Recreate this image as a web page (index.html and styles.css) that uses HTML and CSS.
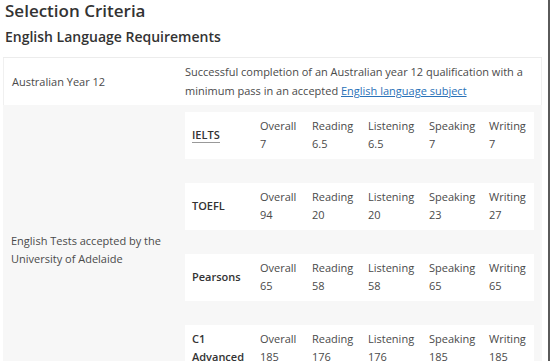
FILE: index.html
```html
<!DOCTYPE html>
<html lang="en">
<head>
<meta charset="utf-8">
<title>Selection Criteria</title>
<link rel="stylesheet" href="styles.css">
</head>
<body>
<div class="frame">
  <h1 class="title">Selection Criteria</h1>
  <h2 class="subtitle">English Language Requirements</h2>
  <div class="table">
    <div class="row row-white">
      <div class="cell-label">Australian Year 12</div>
      <div class="cell-body">Successful completion of an Australian year 12 qualification with a minimum pass in an accepted <a href="#" class="link">English language subject</a></div>
    </div>
    <div class="row row-grey">
      <div class="cell-label">English Tests accepted by the University of Adelaide</div>
      <div class="cell-body cards">
        <div class="card">
          <div class="test"><abbr class="abbr" title="International English Language Testing System">IELTS</abbr></div>
          <div class="score"><span>Overall</span><span>7</span></div>
          <div class="score"><span>Reading</span><span>6.5</span></div>
          <div class="score"><span>Listening</span><span>6.5</span></div>
          <div class="score"><span>Speaking</span><span>7</span></div>
          <div class="score"><span>Writing</span><span>7</span></div>
        </div>
        <div class="card">
          <div class="test">TOEFL</div>
          <div class="score"><span>Overall</span><span>94</span></div>
          <div class="score"><span>Reading</span><span>20</span></div>
          <div class="score"><span>Listening</span><span>20</span></div>
          <div class="score"><span>Speaking</span><span>23</span></div>
          <div class="score"><span>Writing</span><span>27</span></div>
        </div>
        <div class="card">
          <div class="test">Pearsons</div>
          <div class="score"><span>Overall</span><span>65</span></div>
          <div class="score"><span>Reading</span><span>58</span></div>
          <div class="score"><span>Listening</span><span>58</span></div>
          <div class="score"><span>Speaking</span><span>65</span></div>
          <div class="score"><span>Writing</span><span>65</span></div>
        </div>
        <div class="card">
          <div class="test">C1 Advanced</div>
          <div class="score"><span>Overall</span><span>185</span></div>
          <div class="score"><span>Reading</span><span>176</span></div>
          <div class="score"><span>Listening</span><span>176</span></div>
          <div class="score"><span>Speaking</span><span>185</span></div>
          <div class="score"><span>Writing</span><span>185</span></div>
        </div>
      </div>
    </div>
  </div>
</div>
</body>
</html>
```
FILE: styles.css
```css
html, body {
  margin: 0;
  padding: 0;
  background: #ffffff;
}
body {
  font-family: "Open Sans", "Liberation Sans", sans-serif;
  color: #4a4a4a;
  font-size: 11px;
  overflow: hidden;
}
.frame {
  width: 550px;
  height: 361px;
  border-right: 2px solid #5a5a5a;
  padding-left: 3px;
  box-sizing: border-box;
  overflow: hidden;
}
.title {
  margin: 0;
  padding: 0 0 0 2px;
  font-size: 17px;
  font-weight: 600;
  line-height: 22px;
  color: #333333;
}
.subtitle {
  margin: 5px 0 0 0;
  padding: 0 0 0 2px;
  font-size: 14px;
  font-weight: 600;
  line-height: 20px;
  color: #333333;
}
.table {
  margin-top: 10px;
  width: 539px;
  border-top: 1px solid #ececec;
}
.row {
  display: grid;
  grid-template-columns: 173px 1fr;
}
.row-white {
  background: #ffffff;
  border-left: 1px solid #f0f0f0;
  border-right: 1px solid #f0f0f0;
}
.row-grey {
  background: #f7f7f7;
}
.cell-label {
  align-self: center;
  padding: 0 10px 0 8px;
  line-height: 18px;
}
.cell-body {
  padding: 4px 9px 5px 8px;
  line-height: 19px;
}
.link {
  color: #2b72b8;
  text-decoration: underline;
}
.cards {
  display: flex;
  flex-direction: column;
  gap: 24px;
  padding: 7px 8px 22px 9px;
}
.card {
  background: #ffffff;
  display: grid;
  grid-template-columns: 68px 52px 56px 61px 60px 1fr;
  align-items: center;
  padding: 5px 0 6px 7px;
  line-height: 18px;
}
.test {
  font-weight: 600;
  color: #333333;
  padding-right: 8px;
}
.abbr {
  text-decoration: none;
  border-bottom: 1px solid #999999;
}
.score {
  display: flex;
  flex-direction: column;
}
```
